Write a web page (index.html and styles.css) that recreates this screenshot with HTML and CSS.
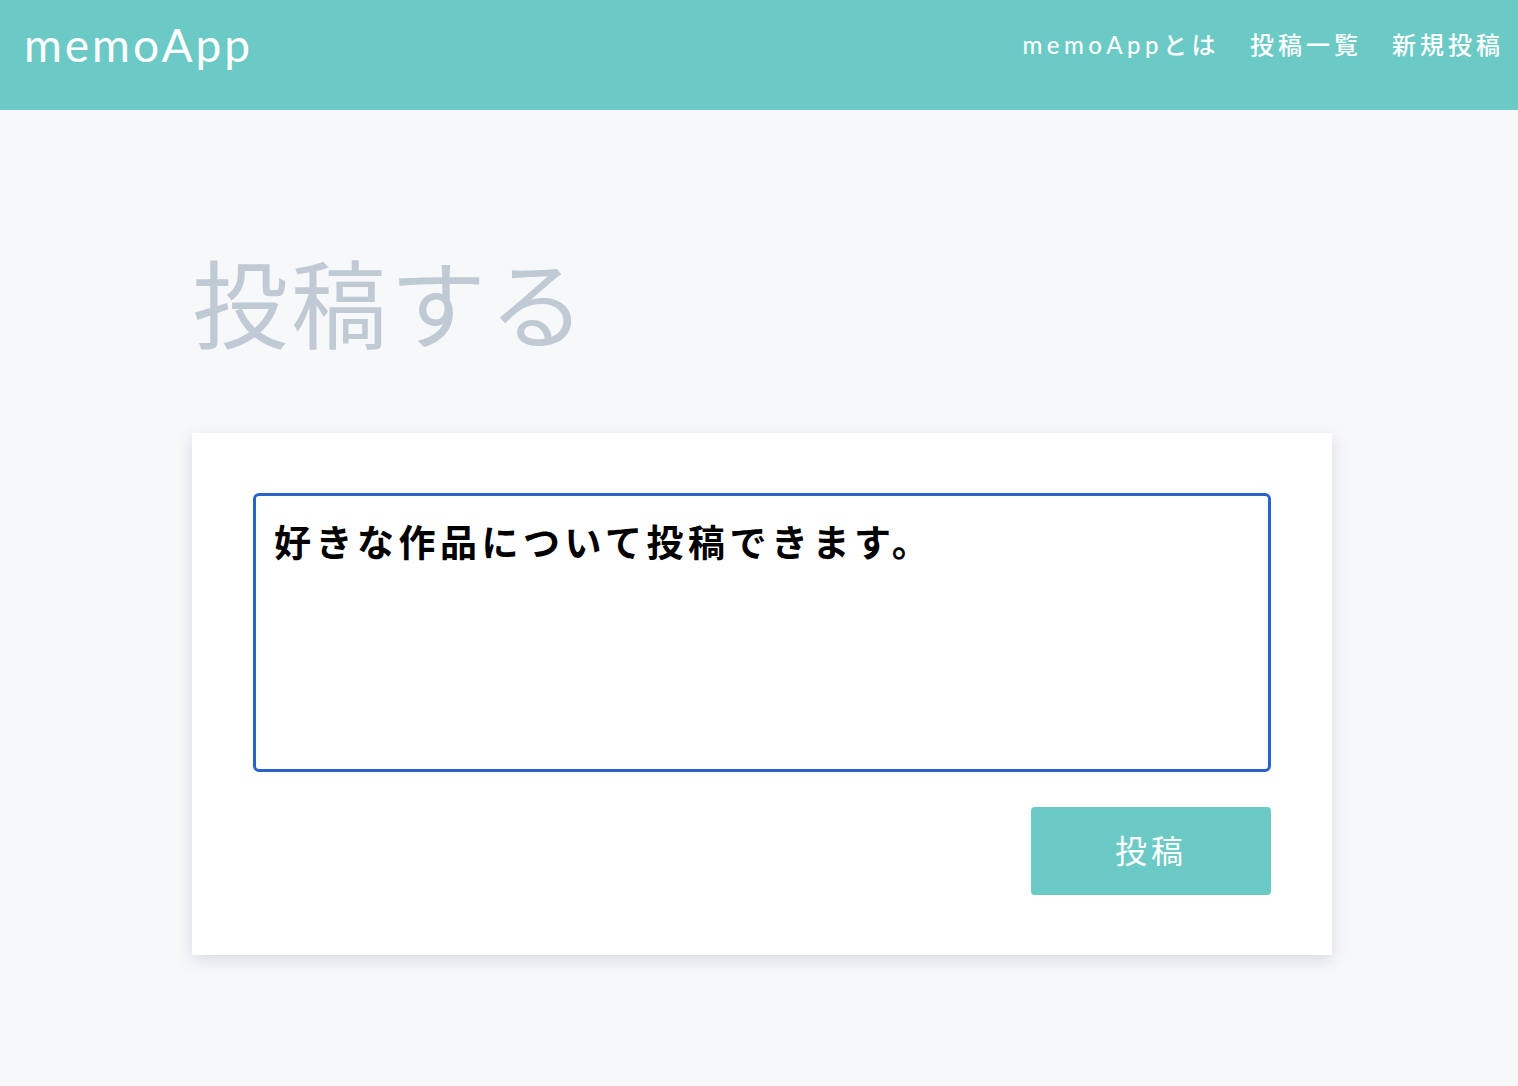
FILE: index.html
```html
<!DOCTYPE html>
<html lang="ja">
<head>
<meta charset="utf-8">
<title>memoApp</title>
<link rel="stylesheet" href="styles.css">
</head>
<body>
<header class="site-header">
  <div class="header-row">
    <a class="logo" href="#">memoApp</a>
    <nav class="nav">
      <a class="nav-link" href="#">memoAppとは</a>
      <a class="nav-link" href="#">投稿一覧</a>
      <a class="nav-link" href="#">新規投稿</a>
    </nav>
  </div>
</header>
<main class="main">
  <div class="container">
    <h1 class="page-title">投稿する</h1>
    <form class="card">
      <textarea class="memo-input">好きな作品について投稿できます。</textarea>
      <div class="actions">
        <button type="button" class="submit">投稿</button>
      </div>
    </form>
  </div>
</main>
</body>
</html>
```
FILE: styles.css
```css
* { box-sizing: border-box; }
html, body { margin: 0; padding: 0; }
body {
  background: #f7f8fa;
  font-family: "Lato", "Noto Sans CJK JP", sans-serif;
  min-height: 1086px;
}
a { text-decoration: none; color: inherit; }

.site-header {
  background: #6bcac5;
  height: 110px;
  padding: 0 14px 20px 24px;
}
.header-row {
  height: 90px;
  display: flex;
  align-items: center;
  justify-content: space-between;
}
.logo {
  color: #fff;
  font-size: 46px;
  font-weight: 400;
  letter-spacing: 3px;
  line-height: 1;
}
.nav {
  display: flex;
  gap: 30px;
  align-items: center;
}
.nav-link {
  color: #fff;
  font-size: 24px;
  font-weight: 500;
  letter-spacing: 4px;
  line-height: 1;
}
.nav-link:first-child { letter-spacing: 4.5px; }

.main { padding-top: 142px; }
.container {
  width: 1140px;
  margin-left: calc(50% - 567px);
}
.page-title {
  margin: 0 0 85px;
  font-family: "Noto Sans CJK JP", sans-serif;
  font-size: 96px;
  line-height: 1;
  font-weight: 400;
  color: #c0cad4;
  letter-spacing: 3px;
}
.card {
  background: #fff;
  padding: 60px 61px 60px 61px;
  box-shadow: 0 5px 15px rgba(50, 70, 100, 0.16);
  display: flex;
  flex-direction: column;
  gap: 35px;
}
.memo-input {
  display: block;
  width: 100%;
  height: 279px;
  border: 3px solid #2962c9;
  border-radius: 6px;
  padding: 18px 18px;
  font-family: "Noto Sans CJK JP", sans-serif;
  font-size: 37px;
  line-height: 1.5;
  font-weight: 600;
  letter-spacing: 4.5px;
  color: #000;
  resize: none;
  outline: none;
}
.actions {
  display: flex;
  justify-content: flex-end;
}
.submit {
  width: 240px;
  height: 88px;
  border: none;
  border-radius: 4px;
  background: #6bcac5;
  color: #fff;
  font-family: "Noto Sans CJK JP", sans-serif;
  font-size: 32px;
  font-weight: 400;
  letter-spacing: 4px;
  padding: 0 0 4px;
  cursor: pointer;
}
```
